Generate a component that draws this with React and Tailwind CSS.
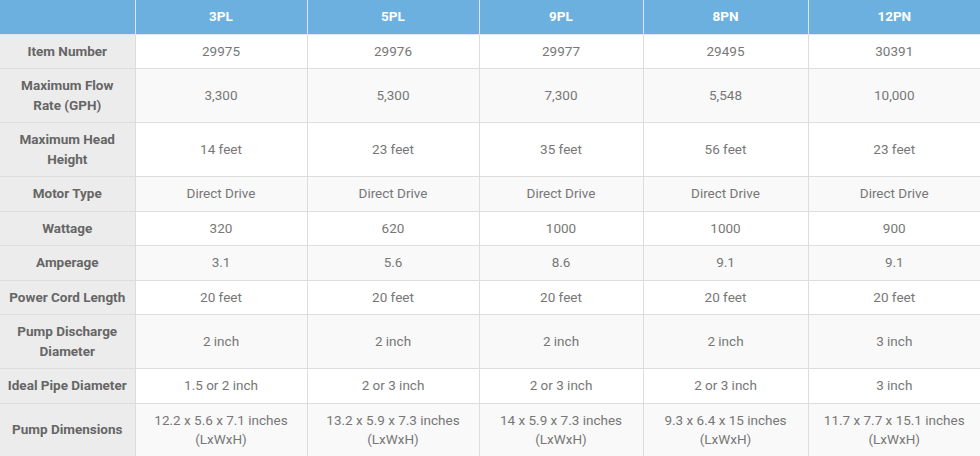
import React from "react";

const models = ["3PL", "5PL", "9PL", "8PN", "12PN"];

const rows = [
    [["Item Number"], ["29975", "29976", "29977", "29495", "30391"]],
    [["Maximum Flow", "Rate (GPH)"], ["3,300", "5,300", "7,300", "5,548", "10,000"]],
    [["Maximum Head", "Height"], ["14 feet", "23 feet", "35 feet", "56 feet", "23 feet"]],
    [["Motor Type"], ["Direct Drive", "Direct Drive", "Direct Drive", "Direct Drive", "Direct Drive"]],
    [["Wattage"], ["320", "620", "1000", "1000", "900"]],
    [["Amperage"], ["3.1", "5.6", "8.6", "9.1", "9.1"]],
    [["Power Cord Length"], ["20 feet", "20 feet", "20 feet", "20 feet", "20 feet"]],
    [["Pump Discharge", "Diameter"], ["2 inch", "2 inch", "2 inch", "2 inch", "3 inch"]],
    [["Ideal Pipe Diameter"], ["1.5 or 2 inch", "2 or 3 inch", "2 or 3 inch", "2 or 3 inch", "3 inch"]],
    [
        ["Pump Dimensions"],
        [
            ["12.2 x 5.6 x 7.1 inches", "(LxWxH)"],
            ["13.2 x 5.9 x 7.3 inches", "(LxWxH)"],
            ["14 x 5.9 x 7.3 inches", "(LxWxH)"],
            ["9.3 x 6.4 x 15 inches", "(LxWxH)"],
            ["11.7 x 7.7 x 15.1 inches", "(LxWxH)"],
        ],
    ],
];

const widths = ["w-[135px]", "w-[172px]", "w-[172px]", "w-[164px]", "w-[165px]", "w-[172px]"];

// 여러 줄 텍스트는 span 블록으로 나눔
const Lines = ({ value }) =>
    Array.isArray(value) ? (
        value.map((line, i) => (
            <span key={i} className="block whitespace-nowrap">
                {line}
            </span>
        ))
    ) : (
        value
    );

export default function App() {
    return (
        <div className="w-[980px] h-[456px] overflow-hidden bg-white font-['Roboto',sans-serif] text-[13.5px] leading-[19.5px]">
            <table className="w-[980px] table-fixed border-collapse">
                <colgroup>
                    {widths.map((w, i) => (
                        <col key={i} className={w} />
                    ))}
                </colgroup>
                <thead>
                    <tr className="bg-[#6bb0de] h-[34px]">
                        <th className="border-r border-b border-[#dde6ee] p-0"></th>
                        {models.map((m) => (
                            <th
                                key={m}
                                className="border-r border-b border-[#dde6ee] last:border-r-0 text-white font-bold text-center px-2 py-0"
                            >
                                {m}
                            </th>
                        ))}
                    </tr>
                </thead>
                <tbody>
                    {rows.map(([label, vals], r) => (
                        <tr key={label[0]} className={r % 2 === 1 ? "bg-[#f9f9f9]" : "bg-white"}>
                            <th className="bg-[#ececec] border-r border-b border-[#dddddd] px-[4px] py-[7px] text-center font-bold text-[#666666]">
                                <Lines value={label} />
                            </th>
                            {vals.map((v, i) => (
                                <td
                                    key={i}
                                    className="border-r border-b border-[#dddddd] last:border-r-0 px-2 py-[7px] text-center text-[#777777]"
                                >
                                    <Lines value={v} />
                                </td>
                            ))}
                        </tr>
                    ))}
                </tbody>
            </table>
        </div>
    );
}
